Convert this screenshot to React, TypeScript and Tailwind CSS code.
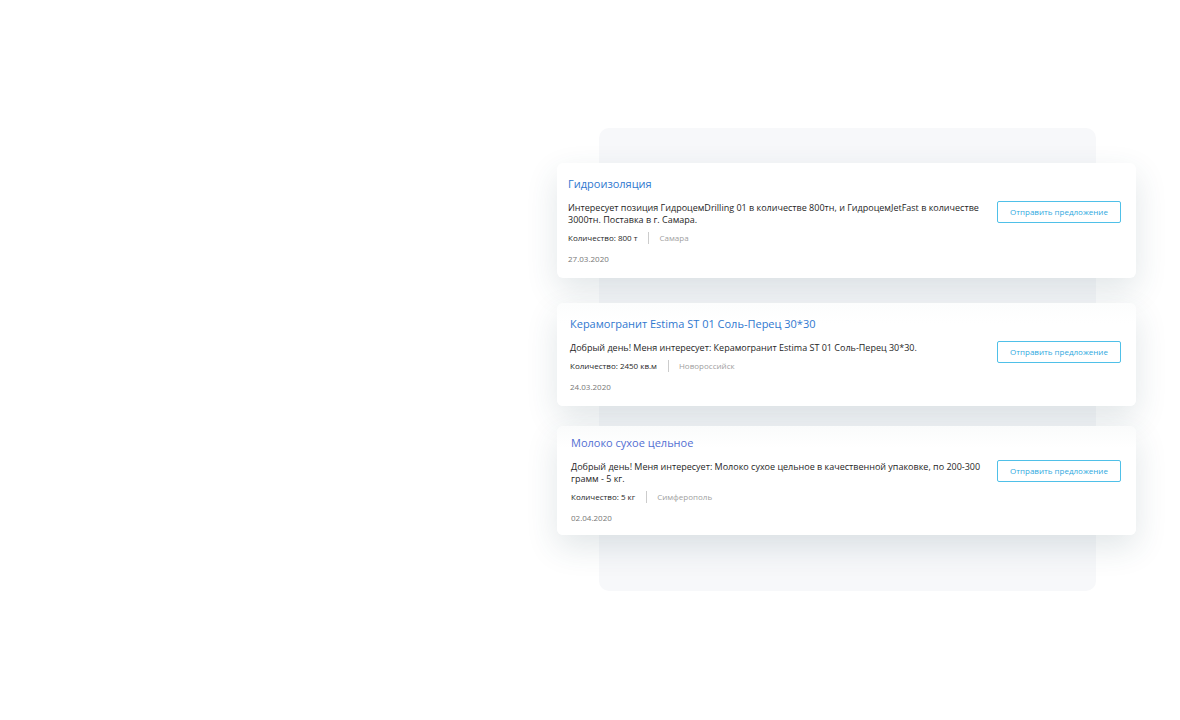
import clsx from "clsx";

type Tender = {
  id: number;
  title: string;
  text: string;
  amount: string;
  city: string;
  date: string;
  className: string;
  linkClassName: string;
};

const tenders: Tender[] = [
  {
    id: 1,
    title: "Гидроизоляция",
    text: "Интересует позиция ГидроцемDrilling 01 в количестве 800тн, и ГидроцемJetFast в количестве 3000тн. Поставка в г. Самара.",
    amount: "800 т",
    city: "Самара",
    date: "27.03.2020",
    className: "bg-white pt-[13px] pb-[13px] pl-[11px]",
    linkClassName: "text-[#2f78cf]",
  },
  {
    id: 2,
    title: "Керамогранит Estima ST 01 Соль-Перец 30*30",
    text: "Добрый день! Меня интересует: Керамогранит Estima ST 01 Соль-Перец 30*30.",
    amount: "2450 кв.м",
    city: "Новороссийск",
    date: "24.03.2020",
    className: "mt-[25px] bg-linear-to-b from-[#fcfdfd] to-white to-20% pt-[13px] pb-[13px] pl-[13px]",
    linkClassName: "text-[#2f78cf]",
  },
  {
    id: 3,
    title: "Молоко сухое цельное",
    text: "Добрый день! Меня интересует: Молоко сухое цельное в качественной упаковке, по 200-300 грамм - 5 кг.",
    amount: "5 кг",
    city: "Симферополь",
    date: "02.04.2020",
    className: "mt-5 bg-linear-to-b from-[#fafbfb] to-white to-20% pt-[9px] pb-[11px] pl-[14px]",
    linkClassName: "text-[#536fd3]",
  },
];

function TenderCard({ tender }: { tender: Tender }) {
  return (
    <article
      className={clsx("rounded-md pr-[15px] shadow-[0_12px_32px_rgba(45,80,95,0.14)]", tender.className)}
    >
      <h2 className="text-[11px] leading-4">
        <a href="#" className={tender.linkClassName}>
          {tender.title}
        </a>
      </h2>
      <div className="mt-[9px] flex items-start justify-between gap-3">
        <div className="min-w-0 flex-1 pt-px text-[9px] leading-3 text-[#262626]">
          <p>{tender.text}</p>
          <div className="mt-1.5 flex text-[8px]">
            <span>Количество: {tender.amount}</span>
            <span className="ml-[11px] border-l border-[#ccc] pl-[10px] text-[#a0a0a0]">{tender.city}</span>
          </div>
          <time className="mt-[9px] block text-[8px] text-[#777]">{tender.date}</time>
        </div>
        <button
          type="button"
          className="h-[22px] w-[124px] shrink-0 rounded-xs border border-[#4fc0e8] text-[8px] text-[#2fa9e0]"
        >
          Отправить предложение
        </button>
      </div>
    </article>
  );
}

export default function App() {
  return (
    <main className="min-h-screen bg-white pt-32 font-['Open_Sans',sans-serif]">
      <section className="mr-[84px] ml-auto w-[calc(50%-93px)] rounded-[10px] bg-[#f7f8fa] pt-[35px] pb-14">
        <div className="-mr-10 -ml-[42px]">
          {tenders.map((tender) => (
            <TenderCard key={tender.id} tender={tender} />
          ))}
        </div>
      </section>
    </main>
  );
}
